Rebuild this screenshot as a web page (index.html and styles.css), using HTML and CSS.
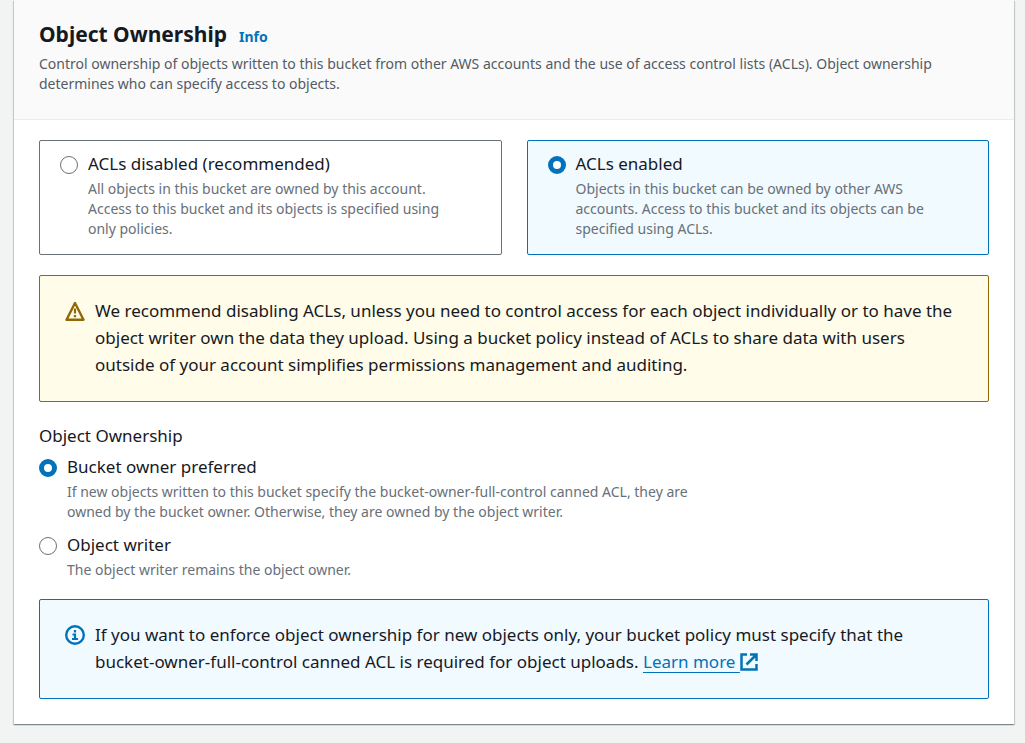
FILE: index.html
```html
<!DOCTYPE html>
<html lang="en">
<head>
<meta charset="utf-8">
<meta name="viewport" content="width=device-width, initial-scale=1">
<title>Object Ownership</title>
<link rel="stylesheet" href="styles.css">
</head>
<body>
<main class="container">
  <header class="container-header">
    <div class="heading-row">
      <h2 class="heading">Object Ownership</h2>
      <a class="info-link" href="#info">Info</a>
    </div>
    <p class="description">Control ownership of objects written to this bucket from other AWS accounts and the use of access control lists (ACLs). Object ownership determines who can specify access to objects.</p>
  </header>
  <div class="container-body">
    <div class="tiles" role="radiogroup" aria-label="Access control lists">
      <label class="tile">
        <input class="radio" type="radio" name="acl">
        <span class="option">
          <span class="option-title">ACLs disabled (recommended)</span>
          <span class="option-text">All objects in this bucket are owned by this account. Access to this bucket and its objects is specified using only policies.</span>
        </span>
      </label>
      <label class="tile tile-selected">
        <input class="radio" type="radio" name="acl" checked>
        <span class="option">
          <span class="option-title">ACLs enabled</span>
          <span class="option-text">Objects in this bucket can be owned by other AWS accounts. Access to this bucket and its objects can be specified using ACLs.</span>
        </span>
      </label>
    </div>
    <div class="alert alert-warning">
      <svg class="alert-icon" viewBox="0 0 20 20" aria-hidden="true">
        <path d="M10 2 18.500 18.700H1.500Z" fill="none" stroke="currentColor" stroke-width="2.400" stroke-linejoin="round"/>
        <path d="M10 7.500v5M10 14v2.200" fill="none" stroke="currentColor" stroke-width="2.200"/>
      </svg>
      <p class="alert-text">We recommend disabling ACLs, unless you need to control access for each object individually or to have the object writer own the data they upload. Using a bucket policy instead of ACLs to share data with users outside of your account simplifies permissions management and auditing.</p>
    </div>
    <fieldset class="field">
      <legend class="field-label">Object Ownership</legend>
      <div class="radio-list">
        <label class="radio-row">
          <input class="radio" type="radio" name="owner" checked>
          <span class="option">
            <span class="option-title">Bucket owner preferred</span>
            <span class="option-text">If new objects written to this bucket specify the bucket-owner-full-control canned ACL, they are owned by the bucket owner. Otherwise, they are owned by the object writer.</span>
          </span>
        </label>
        <label class="radio-row">
          <input class="radio" type="radio" name="owner">
          <span class="option">
            <span class="option-title">Object writer</span>
            <span class="option-text">The object writer remains the object owner.</span>
          </span>
        </label>
      </div>
    </fieldset>
    <div class="alert alert-info">
      <svg class="alert-icon" viewBox="0 0 20 20" aria-hidden="true">
        <circle cx="10" cy="10" r="8.800" fill="none" stroke="currentColor" stroke-width="2.400"/>
        <path d="M10 5v2.400M7.500 9.500H10V14M7 14h6" fill="none" stroke="currentColor" stroke-width="2.200"/>
      </svg>
      <p class="alert-text">If you want to enforce object ownership for new objects only, your bucket policy must specify that the bucket-owner-full-control canned ACL is required for object uploads. <a class="learn-link" href="#learn">Learn more <svg class="external-icon" viewBox="0 0 18 18" aria-hidden="true"><path d="M7 1.500H1.500V16.500H16.500V11M10 1.500H16.500V8M16 2 6.500 11.500" fill="none" stroke="currentColor" stroke-width="2.500"/></svg></a></p>
    </div>
  </div>
</main>
</body>
</html>
```
FILE: styles.css
```css
* {
  box-sizing: border-box;
}

body {
  margin: 0;
  padding: 0 11px 18px 14px;
  background: #f2f3f3;
  color: #16191f;
  font-family: "Noto Sans", "Open Sans", sans-serif;
  font-size: 17px;
  line-height: 27px;
}

p,
h2 {
  margin: 0;
}

.container {
  background: #fff;
  box-shadow: 0 1px 1px 0 rgba(0, 28, 36, 0.3), 1px 1px 1px 0 rgba(0, 28, 36, 0.15), -1px 1px 1px 0 rgba(0, 28, 36, 0.15);
}

.container-header {
  padding: 16px 25px 25px;
  background: #fafafa;
  border-bottom: 1px solid #eaeded;
}

.heading-row {
  display: flex;
  align-items: baseline;
  gap: 12px;
  margin-bottom: 2px;
}

.heading {
  font-size: 21px;
  line-height: 36px;
}

.info-link {
  color: #0073bb;
  font-size: 14px;
  font-weight: 700;
  text-decoration: none;
}

.description,
.option-text {
  font-size: 14px;
  line-height: 20px;
}

.description {
  color: #545b64;
}

.container-body {
  padding: 20px 25px 25px;
}

.tiles {
  display: grid;
  grid-template-columns: 1fr 1fr;
  gap: 25px;
  margin-bottom: 20px;
}

.tile {
  display: flex;
  gap: 10px;
  padding: 10px 20px 15px;
  border: 1px solid #687078;
  border-radius: 2px;
}

.tile .option {
  max-width: 370px;
}

.tile-selected {
  background: #f1faff;
  border-color: #0073bb;
}

.radio {
  appearance: none;
  flex: none;
  width: 18px;
  height: 18px;
  margin: 5px 0 0;
  border: 1px solid #687078;
  border-radius: 50%;
  background: #fff;
}

.radio:checked {
  border: 5px solid #0073bb;
}

.option-title,
.option-text {
  display: block;
}

.option-text {
  color: #687078;
}

.option-title {
  margin-bottom: 2px;
  line-height: 26px;
}

.alert {
  display: flex;
  gap: 10px;
  padding: 21px 25px 23px;
  border: 1px solid;
  border-radius: 2px;
}

.alert-warning {
  background: #fffce9;
  color: #906806;
}

.alert-info {
  background: #f1faff;
  color: #0073bb;
}

.alert-icon {
  flex: none;
  width: 20px;
  height: 20px;
  margin-top: 4px;
}

.alert-text {
  color: #16191f;
}

.field {
  min-width: 0;
  margin: 20px 0 19px;
  padding: 0;
  border: 0;
}

.field-label {
  margin-bottom: 5px;
  padding: 0;
}

.radio-list {
  display: grid;
  gap: 10px;
  max-width: 690px;
}

.radio-row {
  display: flex;
  gap: 10px;
}

.learn-link {
  color: #0073bb;
  text-decoration: underline;
  text-decoration-thickness: 1px;
  text-underline-offset: 4px;
}

.external-icon {
  width: 18px;
  height: 18px;
  vertical-align: -3px;
}
```
